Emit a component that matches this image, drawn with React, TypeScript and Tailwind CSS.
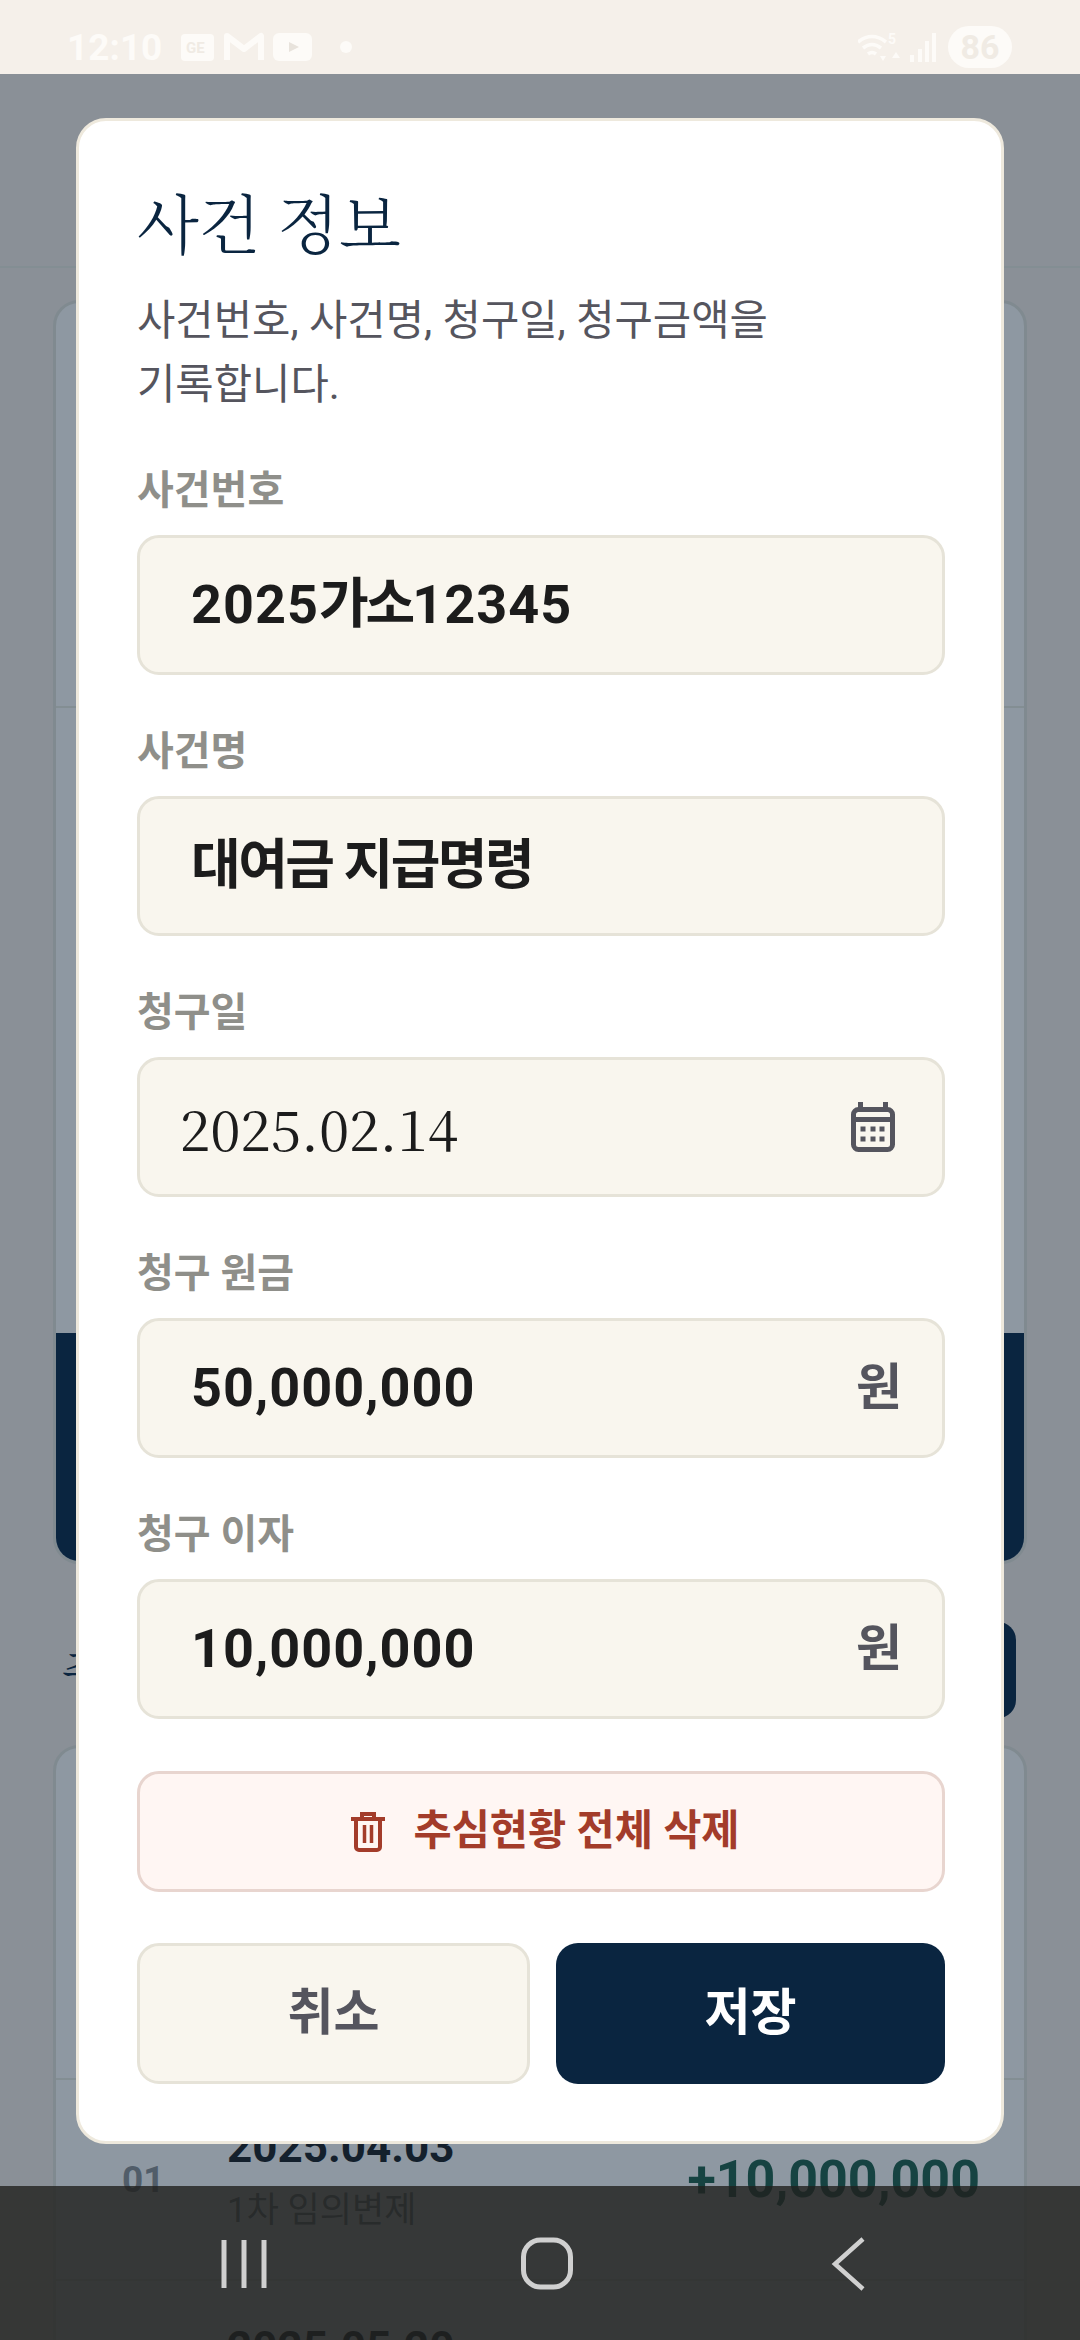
import React from "react";

const sans = "font-['Roboto','Noto_Sans_CJK_KR',sans-serif]";
const serif = "font-['Noto_Serif_CJK_KR','Noto_Sans_CJK_KR',serif]";

function Calendar() {
  return (
    <svg width="44" height="50" viewBox="0 0 44 50" className="shrink-0 mr-[7px]">
      <rect x="7" y="0" width="5" height="8" fill="#55555e" />
      <rect x="32" y="0" width="5" height="8" fill="#55555e" />
      <rect x="2.500" y="7.500" width="39" height="40" rx="5" fill="none" stroke="#55555e" strokeWidth="5" />
      <rect x="2" y="15" width="40" height="5" fill="#55555e" />
      {[12, 22, 31].map((x) =>
        [27, 37].map((y) => <rect key={`${x}-${y}`} x={x - 2.500} y={y - 2.500} width="5" height="5" fill="#55555e" />)
      )}
    </svg>
  );
}

function Trash() {
  return (
    <svg width="34" height="40" viewBox="0 0 34 40" className="shrink-0">
      <path d="M0 7h34M11 6V2h12v4" fill="none" stroke="#a33c2a" strokeWidth="4" />
      <path d="M5 7v28a3 3 0 0 0 3 3h18a3 3 0 0 0 3-3V7" fill="none" stroke="#a33c2a" strokeWidth="4" />
      <path d="M13.500 13v18M20.500 13v18" fill="none" stroke="#a33c2a" strokeWidth="3.500" />
    </svg>
  );
}

function Field({ label, children }: { label: string; children: React.ReactNode }) {
  return (
    <div className="flex flex-col">
      <div className="h-[47px] text-[40px] leading-[47px] font-bold text-[#8f8f8a] mb-[21px] -mt-[6px]">{label}</div>
      <div className="h-[140px] rounded-[22px] border-[3px] border-[#e6e3d8] bg-[#f9f6ee] flex items-center justify-between pl-[51px] pr-[40px]">
        {children}
      </div>
    </div>
  );
}

function Value({ children, track }: { children: React.ReactNode; track?: boolean }) {
  return (
    <span className={`text-[54px] font-bold text-[#1c1c1c] leading-none ${track ? "tracking-[1px]" : "tracking-[-2.500px]"}`}>
      {children}
    </span>
  );
}

function Unit() {
  return <span className="text-[50px] font-bold text-[#55555e] leading-none">원</span>;
}

function StatusBar() {
  return (
    <div className="absolute top-0 left-0 right-0 h-[74px] bg-[#f5f0ea] flex items-center justify-between pl-[67px] pr-[68px] pt-[20px] text-[#fdfbf8]">
      <div className="flex items-center">
        <span className="text-[37px] font-bold leading-none w-[114px] font-['Roboto',sans-serif]">12:10</span>
        <svg width="171" height="32" viewBox="0 0 171 32">
          <rect x="0" y="3" width="33" height="27" rx="4" fill="#fdfbf8" />
          <text x="5" y="22" fontSize="15" fontWeight="700" fontFamily="Roboto, sans-serif" fill="#f0ebe4">GE</text>
          <path d="M46 29V5l17 13 17-13v24" fill="none" stroke="#fdfbf8" strokeWidth="6" strokeLinejoin="round" />
          <rect x="92" y="2" width="39" height="28" rx="6" fill="#fdfbf8" />
          <path d="M108 11l10 5-10 5z" fill="#e8e3dc" />
          <circle cx="165" cy="16" r="6" fill="#fdfbf8" />
        </svg>
      </div>
      <div className="flex items-center gap-[10px]">
        <svg width="80" height="32" viewBox="0 0 80 32">
          <path d="M0 11q14-11 28 0M5 17q9-7 18 0M10 23q4-3 8 0" fill="none" stroke="#fdfbf8" strokeWidth="3.500" />
          <path d="M22 25l3 5 3-5zM34 27l4-6 4 6z" fill="#fdfbf8" />
          <text x="30" y="13" fontSize="14" fontWeight="700" fontFamily="Roboto, sans-serif" fill="#fdfbf8">5</text>
          <rect x="52" y="24" width="4" height="7" fill="#fdfbf8" />
          <rect x="60" y="18" width="4" height="13" fill="#fdfbf8" />
          <rect x="67" y="10" width="4" height="21" fill="#fdfbf8" />
          <rect x="74" y="2" width="4" height="29" fill="#fdfbf8" />
        </svg>
        <div className="w-[64px] h-[42px] rounded-full bg-[#fdfbf8] flex items-center justify-center text-[34px] font-bold text-[#f0ebe4] font-['Roboto',sans-serif]">
          86
        </div>
      </div>
    </div>
  );
}

function Page() {
  return (
    <div className="flex flex-col">
      <div className="h-[268px] border-b-[2px] border-[#e6e3d8]" />
      <div className="mx-[53px] mt-[32px] h-[1264px] rounded-[26px] border-[3px] border-[#e0ddd2] bg-[#f9f6f2] overflow-hidden flex flex-col">
        <div className="h-[405px] border-b-[2px] border-[#e6e3d8]" />
        <div className="flex-1" />
        <div className="h-[228px] bg-[#0a2540]" />
      </div>
      <div className="h-[181px] pl-[62px] pr-[64px] flex items-start justify-between">
        <span className={`text-[46px] leading-[69px] text-[#0a2540] mt-[68px] ${serif}`}>추심현황</span>
        <div className="w-[200px] h-[96px] mt-[58px] rounded-[18px] bg-[#0a2540]" />
      </div>
      <div className="mx-[53px] rounded-[26px] border-[3px] border-[#e0ddd2] bg-[#f9f6f2] flex flex-col">
        <div className="h-[332px] border-b-[2px] border-[#e6e3d8]" />
        <div className="h-[201px] border-b-[2px] border-[#e6e3d8] flex items-center pl-[66px] pr-[44px]">
          <span className="w-[105px] text-[37px] font-bold text-[#8a8a8a]">01</span>
          <div className="flex-1 flex flex-col gap-[18px] -mt-[5px]">
            <span className="text-[44px] font-bold text-[#1c1c1c] leading-[50px]">2025.04.03</span>
            <span className="text-[35px] text-[#7a7a7a] leading-[42px]">1차 임의변제</span>
          </div>
          <span className="text-[52px] font-bold text-[#1f5c44]">+10,000,000</span>
        </div>
        <div className="h-[100px] pl-[171px] pt-[42px]">
          <span className="text-[44px] font-bold text-[#1c1c1c] leading-[50px]">2025.05.20</span>
        </div>
      </div>
    </div>
  );
}

function Modal() {
  return (
    <div className="w-[928px] h-[2026px] rounded-[30px] border-[3px] border-[#eee9dd] bg-white pl-[58px] pr-[56px] flex flex-col">
      <h2 className={`mt-[61px] text-[64px] leading-[76px] font-light text-[#0a2540] ${serif}`}>사건 정보</h2>
      <p className="mt-[31px] text-[41.700px] leading-[64px] text-[#55555e]">
        사건번호, 사건명, 청구일, 청구금액을
        <br />
        기록합니다.
      </p>
      <div className="mt-[56px] flex flex-col gap-[59px]">
        <Field label="사건번호">
          <span className="text-[54px] font-bold text-[#1c1c1c] leading-none tracking-[1px]">
            2025<span className="tracking-[-3px]">가소</span>12345
          </span>
        </Field>
        <Field label="사건명"><Value>대여금 지급명령</Value></Field>
        <Field label="청구일">
          <span className={`-ml-[11px] text-[55px] leading-none text-[#1c1c1c] ${serif}`}>2025.02.14</span>
          <Calendar />
        </Field>
        <Field label="청구 원금"><Value track>50,000,000</Value><Unit /></Field>
        <Field label="청구 이자"><Value track>10,000,000</Value><Unit /></Field>
      </div>
      <div className="mt-[52px] h-[121px] rounded-[22px] border-[3px] border-[#e8d5cf] bg-[#fff6f3] flex items-center justify-center gap-[28px] pl-[9px] text-[41.500px] font-bold text-[#a33c2a]">
        <Trash />
        추심현황 전체 삭제
      </div>
      <div className="mt-[51px] flex gap-[26px]">
        <div className="w-[393px] h-[141px] rounded-[22px] border-[3px] border-[#e6e3d8] bg-[#f9f6ee] flex items-center justify-center text-[50px] font-bold text-[#55555e]">
          취소
        </div>
        <div className="flex-1 h-[141px] rounded-[22px] bg-[#0a2540] flex items-center justify-center text-[50px] font-bold text-white">
          저장
        </div>
      </div>
    </div>
  );
}

function NavBar() {
  return (
    <div className="absolute left-0 right-0 bottom-0 h-[154px] bg-[rgba(33,32,30,0.8)]">
      <svg width="1080" height="154" viewBox="0 0 1080 154" fill="none" stroke="#d0d0d0">
        <path d="M224 54v48M244 54v48M264 54v48" strokeWidth="5" />
        <rect x="523.500" y="54" width="47" height="47" rx="17" strokeWidth="5" />
        <path d="M863 53l-28 25 28 25" strokeWidth="4.500" />
      </svg>
    </div>
  );
}

export default function App() {
  return (
    <div className={`relative w-[1080px] h-[2340px] overflow-hidden bg-[#f3e7de] ${sans}`}>
      <Page />
      <div className="absolute inset-0 top-[74px] bg-[rgba(10,37,64,0.45)] flex justify-center pt-[44px]">
        <Modal />
      </div>
      <StatusBar />
      <NavBar />
    </div>
  );
}
